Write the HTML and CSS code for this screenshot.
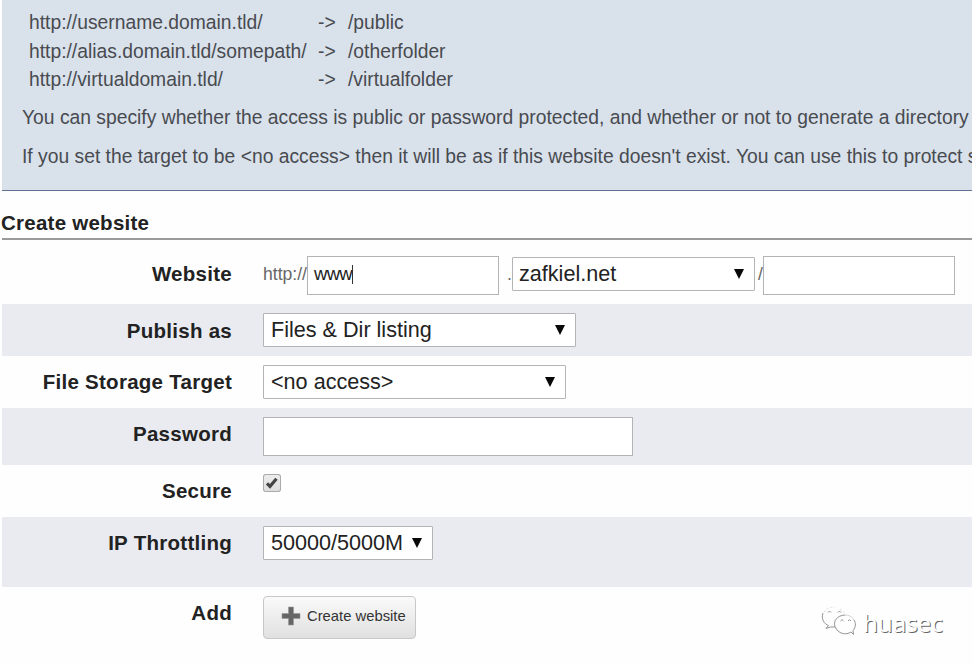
FILE: index.html
```html
<!DOCTYPE html>
<html lang="en">
<head>
<meta charset="utf-8">
<title>Create website</title>
<link rel="stylesheet" href="styles.css">
</head>
<body>
<main class="page">
  <section class="info">
    <div class="examples">
      <span>http://username.domain.tld/</span><span>-&gt;</span><span>/public</span>
      <span>http://alias.domain.tld/somepath/</span><span>-&gt;</span><span>/otherfolder</span>
      <span>http://virtualdomain.tld/</span><span>-&gt;</span><span>/virtualfolder</span>
    </div>
    <p class="note note-access">You can specify whether the access is public or password protected, and whether or not to generate a directory</p>
    <p class="note note-target">If you set the target to be &lt;no access&gt; then it will be as if this website doesn't exist. You can use this to protect s</p>
  </section>
  <h2 class="heading">Create website</h2>
  <form class="form">
    <div class="row row-website">
      <label class="label">Website</label>
      <div class="field">
        <span class="affix scheme">http://</span>
        <div class="input host"><span>www</span><i class="caret"></i></div>
        <span class="affix dot">.</span>
        <div class="select domain"><span>zafkiel.net</span><i class="arrow"></i></div>
        <span class="affix slash">/</span>
        <div class="input path"></div>
      </div>
    </div>
    <div class="row row-publish shaded">
      <label class="label">Publish as</label>
      <div class="field"><div class="select publish"><span>Files &amp; Dir listing</span><i class="arrow"></i></div></div>
    </div>
    <div class="row row-storage">
      <label class="label label-tight">File Storage Target</label>
      <div class="field"><div class="select storage"><span>&lt;no access&gt;</span><i class="arrow"></i></div></div>
    </div>
    <div class="row row-password shaded">
      <label class="label label-tight">Password</label>
      <div class="field"><div class="input password"></div></div>
    </div>
    <div class="row row-secure">
      <label class="label label-tight">Secure</label>
      <div class="field">
        <span class="checkbox"><svg width="18" height="18" viewBox="0 0 18 18"><path d="M4 9.300 7 12.300 13.500 4.800" fill="none" stroke="#444" stroke-width="3.200"/></svg></span>
      </div>
    </div>
    <div class="row row-throttle shaded">
      <label class="label">IP Throttling</label>
      <div class="field"><div class="select throttle"><span>50000/5000M</span><i class="arrow"></i></div></div>
    </div>
    <div class="row row-add">
      <label class="label label-tight">Add</label>
      <div class="field">
        <button type="button" class="button">
          <svg width="20" height="20" viewBox="0 0 20 20"><path d="M7.500 1h5v6.500H19v5h-6.500V19h-5v-6.500H1v-5h6.500z" fill="#666" stroke="#999" stroke-width=".6"/></svg>
          <span>Create website</span>
        </button>
      </div>
    </div>
  </form>
</main>
<div class="watermark">
  <svg width="38" height="32" viewBox="0 0 38 32" fill="none" stroke="#888" stroke-width=".9">
    <path d="M2 8C0 14 3 19 7.500 20.500L5 23.500 9.500 22 14 22" />
    <path d="M3 7C6 3 10 1.500 14 2.500M19 4C22 5.500 23.500 7 24 9" stroke="#ddd" stroke-dasharray="2 2"/>
    <path d="M24 10C16 10.500 12 16 14 21.500 17 29 25 30.500 30 27L32.500 29.500 32 25.500C35 22 35 18 33 15"/>
    <path d="M33 15C31 11.500 28 10 24 10" stroke="#ccc"/>
    <path d="M7 7.500q1.500-3 3 0M17 7.500q1.500-3 3 0M19.500 16q1.500-2.800 3 0M27 16q1.500-2.800 3 0"/>
  </svg>
  <span>huasec</span>
</div>
</body>
</html>
```
FILE: styles.css
```css
* { box-sizing: border-box; }
body {
  margin: 0;
  height: 664px;
  overflow: hidden;
  position: relative;
  background: #fefefe;
  color: #222;
  font-family: "Liberation Sans", Arial, sans-serif;
}
.page { padding: 0 2px; }
.info {
  height: 191px;
  padding: 9px 0 0 20px;
  overflow: hidden;
  white-space: nowrap;
  color: #484b50;
  background: #d9e1eb;
  border-bottom: 1px solid #636f91;
  font-size: 19.3px;
}
.examples {
  display: grid;
  grid-template-columns: 289px 30px auto;
  grid-auto-rows: 28.5px;
  padding-left: 7px;
  line-height: 28px;
}
.note { margin: 0; line-height: 39px; }
.note-access { margin-top: 3px; }
.heading {
  margin: 0;
  height: 49px;
  padding-top: 18px;
  line-height: 28px;
  font-size: 20.5px;
  letter-spacing: .25px;
  border-bottom: 2px solid #9a9a9a;
  text-indent: -1px;
}
.row { display: flex; gap: 31px; align-items: flex-start; }
.shaded { background: #e9ebf0; }
.row-website { height: 64px; padding-top: 16px; }
.row-publish { height: 52px; padding-top: 9px; }
.row-storage { height: 52px; padding-top: 9px; }
.row-password { height: 57px; padding-top: 9px; }
.row-secure { height: 52px; padding-top: 9px; }
.row-throttle { height: 70px; padding-top: 8px; }
.row-add { height: 77px; padding-top: 9px; }
.label {
  width: 230px;
  text-align: right;
  font-size: 20.5px;
  font-weight: bold;
  letter-spacing: .27px;
  line-height: 35px;
  white-space: nowrap;
}
.label-tight { line-height: 33px; }
.field { display: flex; align-items: flex-start; }
.affix { font-size: 17.6px; line-height: 36px; color: #666; }
.scheme { width: 44px; }
.dot { width: 13px; padding-left: 8px; }
.slash { width: 8px; padding-left: 3px; }
.input {
  display: flex;
  align-items: center;
  height: 39px;
  padding: 0 0 3px 6px;
  background: #fff;
  border: 1px solid #b4b4b4;
  font-size: 18.5px;
  letter-spacing: -.7px;
}
.host, .path { width: 192px; }
.password { width: 370px; }
.caret { width: 1px; height: 19px; background: #333; }
.select {
  display: flex;
  align-items: center;
  justify-content: space-between;
  height: 34px;
  padding: 0 10px 0 7px;
  background: #fff;
  border: 1px solid #b4b4b4;
  border-radius: 1px;
  font-size: 21.6px;
  line-height: 30px;
  white-space: nowrap;
}
.domain { width: 243px; margin-top: 1px; padding-left: 6px; }
.publish { width: 313px; }
.storage { width: 303px; }
.throttle { width: 170px; margin-top: 1px; }
.arrow {
  width: 10px;
  height: 10px;
  background: #080808;
  clip-path: polygon(0 0, 100% 0, 50% 100%);
}
.checkbox {
  width: 18px;
  height: 18px;
  border-radius: 3px;
  background: linear-gradient(#eee, #ddd);
  box-shadow: inset 0 0 0 1px #aaa;
}
.checkbox svg { display: block; }
.button {
  display: flex;
  align-items: center;
  gap: 6px;
  width: 153px;
  height: 43px;
  padding: 0 0 3px 17px;
  border: 1px solid #c8c8c8;
  border-radius: 4px;
  background: linear-gradient(#fafafa, #e0e0e0);
  color: #333;
  font: 14.8px "Liberation Sans", Arial, sans-serif;
  white-space: nowrap;
}
.watermark {
  position: absolute;
  left: 821px;
  top: 605px;
  display: flex;
  gap: 4px;
  color: #fff;
  font: 24px/36px "Noto Sans", sans-serif;
  text-shadow: 1px 1px 0 #666;
}
```
